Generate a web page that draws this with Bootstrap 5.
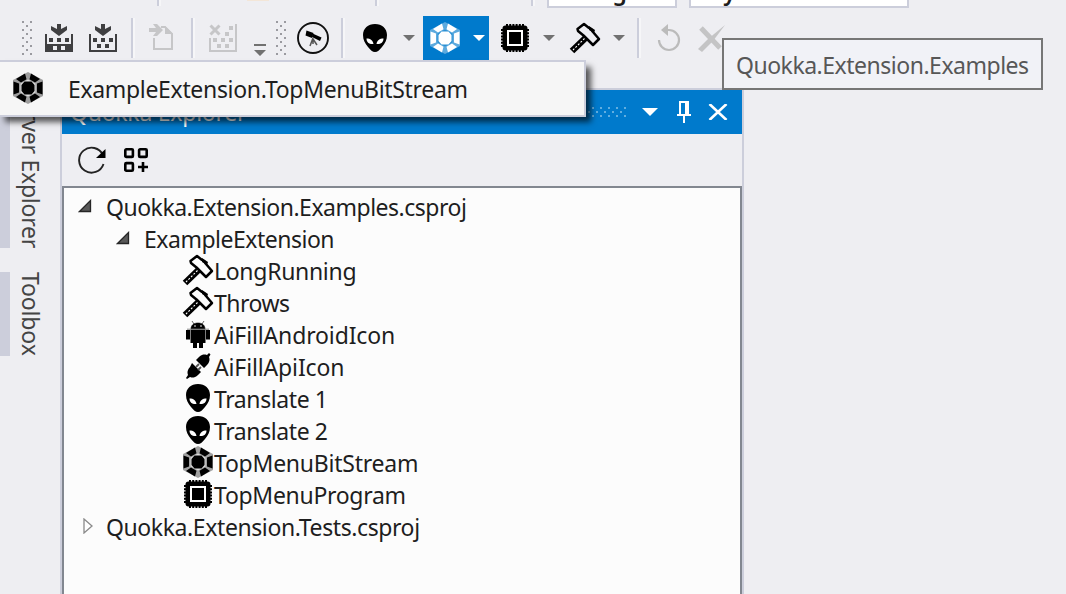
<!DOCTYPE html>
<html lang="en">
<head>
<meta charset="utf-8">
<title>Quokka Explorer</title>
<link href="https://cdn.jsdelivr.net/npm/bootstrap@5.3.0/dist/css/bootstrap.min.css" rel="stylesheet">
<style>
body{width:1066px;height:594px;overflow:hidden;background:#eeeef2;color:#1e1e1e;font:23px/32px "Noto Sans","Open Sans",sans-serif;letter-spacing:-.49px}
svg{display:block;flex:none}
.strip{height:16px}
.combo{height:8px;background:#fff;border:2px solid #cccedb;border-top:0;overflow:hidden;font-weight:600}
.combo span{display:block;margin-top:-25px}
.vsep{width:4px;height:40px;background:#cccedb;border-right:2px solid #f6f6f8;flex:none}
.vsep.cut{height:6px}
.tools{height:44px}
.hot{background:#007acc;width:66px;height:44px;color:#fff}
.dim{color:#c6c6c8}
.arr{color:#717171}
.ink{color:#000}
.flyout{left:-2px;top:60px;width:588px;height:57px;background:#f6f6f6;border:2px solid #cccedb;box-shadow:6px 6px 6px -1px rgba(0,0,0,.65);z-index:5;letter-spacing:-.33px}
.tip{left:722px;top:38px;width:321px;height:52px;border:2px solid #767676;background:#f1f2f7;color:#575757;padding:2px 0 0 12px;z-index:6}
.rail{width:60px;padding-top:28px}
.sidetab{writing-mode:vertical-rl;border-left:10px solid #cccedb;width:50px;line-height:39px;color:#444;letter-spacing:-.15px;white-space:nowrap}
.pane{width:684px;margin-top:28px;border:2px solid #cccedb;border-bottom:0}
.caption-bar{height:44px;background:#007acc;color:#fff;padding-left:8px;letter-spacing:-.25px}
.pane-tools{height:52px}
.tree{border:2px solid #828790;border-bottom:0;background:#fcfcfc;padding-top:3px}
.tree>div{height:32px}
.ls-a{letter-spacing:-.3px}
.ls-b{letter-spacing:-.14px}
.ls-c{letter-spacing:-.41px}
</style>
</head>
<body class="d-flex flex-column position-relative">
<svg width="0" height="0" class="position-absolute">
<defs>
<pattern id="dots" width="8" height="8" patternUnits="userSpaceOnUse"><path fill="#9a9aa0" d="M0 0h2v2H0zM4 4h2v2H4z"/></pattern>
<pattern id="dots-light" width="8" height="8" patternUnits="userSpaceOnUse"><path fill="#62aee0" d="M0 0h2v2H0zM4 4h2v2H4z"/></pattern>
<symbol id="hex" viewBox="0 0 32 32"><path d="M16 0 31 8v16l-15 8L1 24V8z" fill="currentColor" opacity=".36"/><path d="m16 7.500 7.500 4v9l-7.500 4-7.500-4v-9z" style="fill:var(--gap,#dcdcdc)"/><path fill="currentColor" d="M1.500 9.500 7 11.500v9L1.500 22.500zM30.500 9.500 25 11.500v9l5.500 2zM4 7 13 1.500l1.500 5.700L9 10.500zM28 7 19 1.500l-1.500 5.700 5.500 3.300zM4 25l9 5.500 1.500-5.700L9 21.500zM28 25l-9 5.500-1.500-5.700 5.500-3.300zM12.500 9.500h7l3 3.500v6l-3 3.500h-7l-3-3.500v-6z"/></symbol>
<symbol id="alien" viewBox="0 0 24 28"><path d="M12 0C5 0 0 4.500 0 11c0 5 2 8.500 5 12 2.500 3 4.500 5 7 5s4.500-2 7-5c3-3.500 5-7 5-12C24 4.500 19 0 12 0z"/><path d="M3.500 14.500c4 0 6.500 2 7 5.500-4 .5-7-1.500-7-5.500zM20.500 14.500c-4 0-6.500 2-7 5.500 4 .5 7-1.500 7-5.500z" fill="#fff"/></symbol>
<symbol id="chip" viewBox="0 0 28 28"><path d="M5 1h18M5 27h18M1 5v18M27 5v18" stroke="#000" stroke-width="2" stroke-dasharray="2 1.200"/><rect x="1.500" y="1.500" width="25" height="25" rx="3"/><rect x="7" y="7" width="14" height="14" fill="none" stroke="#fff" stroke-width="2"/></symbol>
<symbol id="hammer" viewBox="0 0 32 32"><path d="M9 9 8.500 7 15 2l5 4 2 1 2 3 6 7-6 6-6-6-3.500-3.500z" fill="none" stroke="#000" stroke-width="2.500" stroke-linejoin="round"/><path d="m20 4 6 4-1 3-5-3z"/><path d="M17 15.500 3 29" stroke="#000" stroke-width="6.500"/><path d="M15.500 16.500 4 28" stroke="#fff" stroke-width="1.100" stroke-dasharray="2 1.600"/></symbol>
<symbol id="caret" viewBox="0 0 12 6"><path fill="currentColor" d="M0 0h12L6 6z"/></symbol>
<symbol id="open" viewBox="0 0 14 14"><path d="M12.500 1.500v11h-11z" fill="#595959" stroke="#262626" stroke-width="1.300"/></symbol>
</defs>
</svg>

<div class="strip d-flex align-items-start">
 <div class="vsep cut" style="margin-left:157px"></div>
 <div style="width:22px;height:1px;background:#f3e6d8;margin-left:86px"></div>
 <div class="vsep cut" style="margin-left:106px"></div>
 <div class="vsep cut" style="margin-left:152px"></div>
 <div class="combo" style="width:130px;margin-left:12px;padding-left:6px"><span>Debug</span></div>
 <div class="combo" style="width:220px;margin-left:12px;padding-left:3px"><span>Any CPU</span></div>
</div>

<div class="tools d-flex align-items-center">
 <svg width="10" height="34" style="margin-left:22px"><rect width="10" height="34" fill="url(#dots)"/></svg>
 <svg width="28" height="28" style="margin-left:13px" viewBox="0 0 28 28" fill="#3f3f41"><path d="M12 0h4v5l6-3v4l-8 6-8-6V2l6 3zM0 10h2v10h24V10h2v18H0zM4 14h4v4H4zM12 14h4v4h-4zM20 14h4v4h-4z"/><path fill="#eeeef2" d="M8 22h4v4H8zM16 22h4v4h-4z"/></svg>
 <svg width="28" height="28" style="margin-left:16px" viewBox="0 0 28 28" fill="#3f3f41"><path d="M12 0h4v5l6-3v4l-8 6-8-6V2l6 3zM0 10h2v16h24V10h2v18H0zM4 14h4v4H4zM12 14h4v4h-4zM20 14h4v4h-4zM8 20h4v4H8zM16 20h4v4h-4z"/></svg>
 <div class="vsep" style="margin-left:14px"></div>
 <svg class="dim" width="24" height="28" style="margin-left:14px" viewBox="0 0 24 28"><path fill="currentColor" d="M0 4h7L4 0h4l6 6-6 6H4l3-4H0zM16 2l8 8h-8z"/><path d="M12 3h4l7 7v15H5V14" fill="none" stroke="currentColor" stroke-width="2"/></svg>
 <div class="vsep" style="margin-left:18px"></div>
 <svg class="dim" width="28" height="28" style="margin-left:14px" viewBox="0 0 28 28"><path d="m1.500 1.500 9 9m0-9-9 9" stroke="currentColor" stroke-width="3"/><path fill="currentColor" d="M26 0h2v28H0V14h2v12h24zM20 2h4v4h-4zM16 8h4v4h-4zM4 14h4v4H4zM12 14h4v4h-4zM20 14h4v4h-4zM8 20h4v4H8zM16 20h4v4h-4z"/></svg>
 <svg class="arr align-self-end" width="12" height="16" style="margin:0 0 0 17px" viewBox="0 0 12 16"><path fill="currentColor" d="M0 0h12v2H0zM0 6h12l-6 6z"/></svg>
 <svg width="10" height="34" style="margin-left:10px"><rect width="10" height="34" fill="url(#dots)"/></svg>
 <svg width="32" height="32" style="margin-left:11px" viewBox="0 0 32 32"><circle cx="16" cy="16" r="15" fill="none" stroke="#111" stroke-width="1.900"/><path d="m9.500 8.500 7 2.500-1.500 5-6.500-2.500z"/><path d="m15.500 11.500 9 4-1.500 3.500-8-4z"/><path d="m16 16-3 8m3-7 4 6m-4-6v5" stroke="#555" stroke-width="1.500"/></svg>
 <div class="vsep" style="margin-left:12px"></div>
 <svg width="24" height="28" style="margin-left:18px"><use href="#alien"/></svg>
 <svg class="arr" width="12" height="6" style="margin-left:16px"><use href="#caret"/></svg>
 <div class="hot d-flex align-items-center" style="margin-left:8px;--gap:#2a90d4"><svg width="32" height="32" style="margin-left:6px"><use href="#hex"/></svg><svg width="12" height="6" style="margin-left:12px"><use href="#caret"/></svg></div>
 <svg width="28" height="28" style="margin-left:12px"><use href="#chip"/></svg>
 <svg class="arr" width="12" height="6" style="margin-left:14px"><use href="#caret"/></svg>
 <svg width="32" height="32" style="margin-left:14px"><use href="#hammer"/></svg>
 <svg class="arr" width="12" height="6" style="margin-left:12px"><use href="#caret"/></svg>
 <div class="vsep" style="margin-left:12px"></div>
 <svg width="24" height="28" style="margin-left:16px" viewBox="0 0 24 28"><path d="M2 16a10 10 0 1 0 10-10H8" fill="none" stroke="#bbb" stroke-width="2.200"/><path fill="#bbb" d="M11 0v12L4 6z"/></svg>
 <svg width="28" height="28" style="margin-left:17px" viewBox="0 0 28 28"><path d="m3 4 19 20" stroke="#c4c4c5" stroke-width="5"/><path fill="#c4c4c5" d="M27 1 15 17 4 28l-4-3 10-10z"/></svg>
</div>

<div class="d-flex flex-grow-1">
 <div class="rail d-flex flex-column">
  <div class="sidetab d-flex justify-content-end" style="height:160px;letter-spacing:-.25px">Server Explorer</div>
  <div class="sidetab" style="height:84px;margin-top:24px">Toolbox</div>
 </div>
 <div class="pane d-flex flex-column">
  <div class="caption-bar d-flex align-items-center">
   <span>Quokka Explorer</span>
   <svg width="370" height="10" class="ms-auto"><rect width="370" height="10" fill="url(#dots-light)"/></svg>
   <svg width="16" height="8" style="margin-left:16px"><use href="#caret"/></svg>
   <svg width="14" height="22" style="margin-left:19px" viewBox="0 0 14 22"><path fill="#fff" d="M2 0h10v13h2v2H8v7H6v-7H0v-2h2zM4 2v11h4V2z"/></svg>
   <svg width="20" height="16" style="margin:0 14px 0 17px" viewBox="0 0 20 16"><path d="m1.500 0 17 16m0-16-17 16" stroke="#fff" stroke-width="2.600"/></svg>
  </div>
  <div class="pane-tools d-flex align-items-center">
   <svg width="28" height="28" style="margin-left:16px" viewBox="0 0 28 28"><path d="M25 9A12.500 12.500 0 1 0 25.500 18" fill="none" stroke="#222" stroke-width="1.900"/><path d="M27.500 3v9H18z"/></svg>
   <svg width="24" height="24" style="margin-left:18px" viewBox="0 0 24 24"><g fill="none" stroke="#000" stroke-width="2.600"><rect x="1.300" y="1.300" width="7.600" height="7.600" rx="1"/><rect x="15.100" y="1.300" width="7.600" height="7.600" rx="1"/><rect x="1.300" y="15.100" width="7.600" height="7.600" rx="1"/><path d="M19 14v10m-5-5h10"/></g></svg>
  </div>
  <div class="tree flex-grow-1">
   <div class="d-flex align-items-center"><svg width="14" height="14" style="margin:-2px 14px 0 14px"><use href="#open"/></svg>Quokka.Extension.Examples.csproj</div>
   <div class="d-flex align-items-center"><svg width="14" height="14" style="margin:-2px 14px 0 52px"><use href="#open"/></svg>ExampleExtension</div>
   <div class="d-flex align-items-center ls-a"><svg width="32" height="32" style="margin:-2px 0 0 118px"><use href="#hammer"/></svg>LongRunning</div>
   <div class="d-flex align-items-center"><svg width="32" height="32" style="margin:-2px 0 0 118px"><use href="#hammer"/></svg>Throws</div>
   <div class="d-flex align-items-center ls-b"><svg width="24" height="28" style="margin:-1px 4px 0 122px" viewBox="0 0 24 28"><path d="M5 8c0-4 3-6 7-6s7 2 7 6zM6 0l2 3M18 0l-2 3" stroke="#000" stroke-width=".6"/><path d="M4.500 8.500h15V22h-15zM0 9h4v9.500H0zM20 9h4v9.500h-4zM7 22h4v5H7zM13 22h4v5h-4z"/><path d="M1 8.200h22" stroke="#888"/><circle cx="9" cy="5" r=".8" fill="#fff"/><circle cx="15" cy="5" r=".8" fill="#fff"/></svg>AiFillAndroidIcon</div>
   <div class="d-flex align-items-center ls-b"><svg width="26" height="26" style="margin:-2px 3px 0 121px" viewBox="0 0 26 26"><path d="m11 7 3-3c4-4 8-2 8-2l2-2 1.500 1.500L24 4s2 4-2 8l-3 3zM7 10l9 9-3 3c-4 4-8 2-8 2l-3 2-1-1 2-3s-2-4 2-8z"/><path d="m11 14 3-3m-1 6 3-3" stroke="#555" stroke-width="1.800"/></svg>AiFillApiIcon</div>
   <div class="d-flex align-items-center ls-c"><svg width="24" height="28" style="margin:-2px 4px 0 122px"><use href="#alien"/></svg>Translate 1</div>
   <div class="d-flex align-items-center ls-c"><svg width="24" height="28" style="margin:-2px 4px 0 122px"><use href="#alien"/></svg>Translate 2</div>
   <div class="d-flex align-items-center" style="letter-spacing:-.24px"><svg class="ink" width="32" height="32" style="margin:-2px 0 0 118px"><use href="#hex"/></svg>TopMenuBitStream</div>
   <div class="d-flex align-items-center ls-a"><svg width="28" height="28" style="margin:-2px 2px 0 120px"><use href="#chip"/></svg>TopMenuProgram</div>
   <div class="d-flex align-items-center ls-c"><svg width="10" height="16" style="margin:-2px 13px 0 19px" viewBox="0 0 10 16"><path d="M1 1v14l8-7z" fill="#fff" stroke="#8a8a8a" stroke-width="1.300"/></svg>Quokka.Extension.Tests.csproj</div>
  </div>
 </div>
</div>

<div class="flyout position-absolute d-flex align-items-center"><svg class="ink" width="32" height="32" style="margin:-1px 24px 0 12px"><use href="#hex"/></svg>ExampleExtension.TopMenuBitStream</div>
<div class="tip position-absolute d-flex align-items-center">Quokka.Extension.Examples</div>
<script src="https://cdn.jsdelivr.net/npm/bootstrap@5.3.0/dist/js/bootstrap.bundle.min.js"></script>
</body>
</html>
